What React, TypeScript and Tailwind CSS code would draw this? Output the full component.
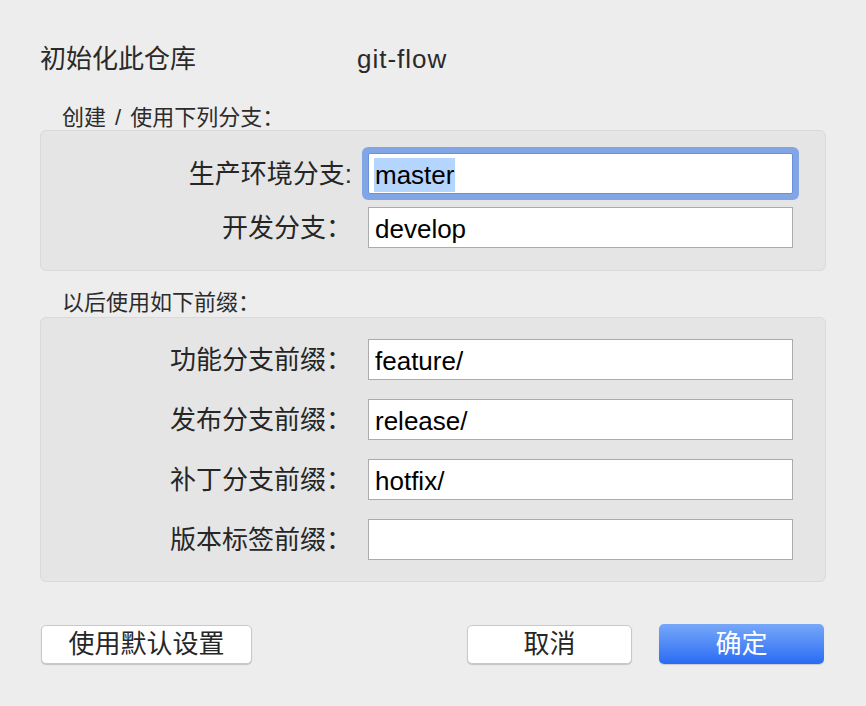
const font = "font-['Liberation_Sans','Noto_Sans_CJK_SC',sans-serif]";

function Field({ label, value, focused }: { label: string; value: string; focused?: boolean }) {
  return (
    <div className="flex items-center gap-[16px]">
      <div className="w-[311px] text-right text-[26px] leading-[32px] text-[#262626]">{label}</div>
      <div
        className={
          focused
            ? "flex h-[41px] w-[425px] items-center rounded-[2px] border border-[#6a90da] bg-white pl-[5px] pt-[2px] shadow-[0_0_0_6px_#82a5e6]"
            : "flex h-[41px] w-[425px] items-center border border-[#ababab] bg-white pl-[5px] pt-[2px]"
        }
      >
        {focused ? (
          <span className="bg-[#b4d5fe] px-px text-[26px] leading-[34px] text-black">{value}</span>
        ) : (
          <span className="px-px text-[26px] leading-[34px] text-black">{value}</span>
        )}
      </div>
    </div>
  );
}

export default function App() {
  return (
    <div className={`${font} flex h-[706px] w-[866px] flex-col bg-[#ededed] pl-[40px] pr-[40px] pt-[43px]`}>
      <div className="flex h-[32px] items-center text-[26px] leading-[32px] text-[#2a2a2a]">
        <span className="w-[317px]">初始化此仓库</span>
        <span className="tracking-[1px]">git-flow</span>
      </div>

      <div className="mt-[31px] h-[24px] pl-[22px] text-[22px] leading-[24px] text-[#2c2c2c]">
        创建<span className="mx-[9px]">/</span>使用下列分支：
      </div>
      <div className="flex flex-col gap-[13px] rounded-[6px] border border-[#dadada] bg-[#e5e5e5] pb-[22px] pt-[22px]">
        <Field label="生产环境分支:" value="master" focused />
        <Field label="开发分支：" value="develop" />
      </div>

      <div className="mt-[20px] h-[24px] pl-[22px] text-[22px] leading-[24px] text-[#2c2c2c]">
        以后使用如下前缀：
      </div>
      <div className="mt-[2px] flex flex-col gap-[19px] rounded-[6px] border border-[#dadada] bg-[#e5e5e5] pb-[21px] pt-[21px]">
        <Field label="功能分支前缀：" value="feature/" />
        <Field label="发布分支前缀：" value="release/" />
        <Field label="补丁分支前缀：" value="hotfix/" />
        <Field label="版本标签前缀：" value="" />
      </div>

      <div className="mt-[42px] flex items-center pl-px pr-[2px]">
        <button className="h-[39px] w-[211px] rounded-[5px] border border-[#c9c9c9] bg-white text-[26px] leading-none text-[#262626] shadow-[0_1px_1px_rgba(0,0,0,0.18)]">
          使用默认设置
        </button>
        <div className="flex-1" />
        <button className="h-[39px] w-[165px] rounded-[5px] border border-[#c9c9c9] bg-white text-[26px] leading-none text-[#262626] shadow-[0_1px_1px_rgba(0,0,0,0.18)]">
          取消
        </button>
        <button className="ml-[27px] h-[40px] w-[165px] rounded-[5px] bg-gradient-to-b from-[#76a7f8] to-[#2a6af4] text-[26px] leading-none text-white shadow-[0_1px_1px_rgba(0,0,0,0.15)]">
          确定
        </button>
      </div>
    </div>
  );
}
